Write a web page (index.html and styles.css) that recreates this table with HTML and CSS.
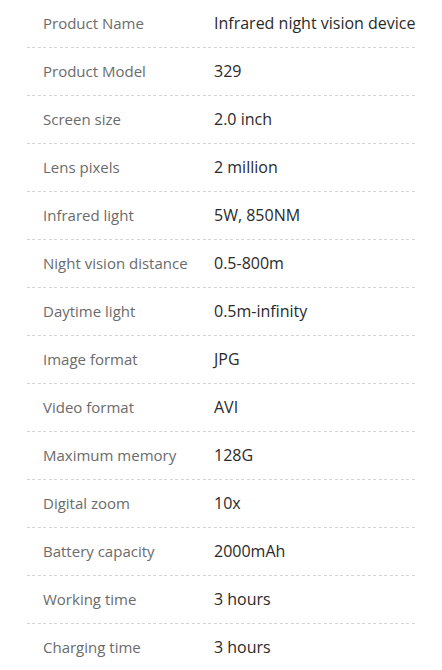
FILE: index.html
```html
<!DOCTYPE html>
<html>
<head>
<meta charset="utf-8">
<link rel="stylesheet" href="styles.css">
</head>
<body>
<div class="spec">
  <div class="row"><span class="label">Product Name</span><span class="value">Infrared night vision device</span></div>
  <div class="row"><span class="label">Product Model</span><span class="value">329</span></div>
  <div class="row"><span class="label">Screen size</span><span class="value">2.0 inch</span></div>
  <div class="row"><span class="label">Lens pixels</span><span class="value">2 million</span></div>
  <div class="row"><span class="label">Infrared light</span><span class="value">5W, 850NM</span></div>
  <div class="row"><span class="label">Night vision distance</span><span class="value">0.5-800m</span></div>
  <div class="row"><span class="label">Daytime light</span><span class="value">0.5m-infinity</span></div>
  <div class="row"><span class="label">Image format</span><span class="value">JPG</span></div>
  <div class="row"><span class="label">Video format</span><span class="value">AVI</span></div>
  <div class="row"><span class="label">Maximum memory</span><span class="value">128G</span></div>
  <div class="row"><span class="label">Digital zoom</span><span class="value">10x</span></div>
  <div class="row"><span class="label">Battery capacity</span><span class="value">2000mAh</span></div>
  <div class="row"><span class="label">Working time</span><span class="value">3 hours</span></div>
  <div class="row last"><span class="label">Charging time</span><span class="value">3 hours</span></div>
</div>
</body>
</html>
```
FILE: styles.css
```css
html, body {
  margin: 0;
  padding: 0;
  background: #fff;
}
body {
  font-family: "Open Sans", "Liberation Sans", sans-serif;
  font-size: 15px;
}
.spec {
  width: 390px;
  margin-left: 27px;
  display: flex;
  flex-direction: column;
}
.row {
  height: 48px;
  display: flex;
  align-items: center;
  padding-left: 16px;
  box-sizing: border-box;
  background-image: repeating-linear-gradient(to right, #d4d4d4 0 3px, transparent 3px 5.5px);
  background-size: 100% 1px;
  background-repeat: no-repeat;
  background-position: left bottom;
  padding-bottom: 2px;
}
.row.last {
  background-image: none;
}
.label {
  width: 171px;
  flex: none;
  color: #6b6b6b;
}
.value {
  font-size: 16px;
  color: #2a2a2a;
}
```
